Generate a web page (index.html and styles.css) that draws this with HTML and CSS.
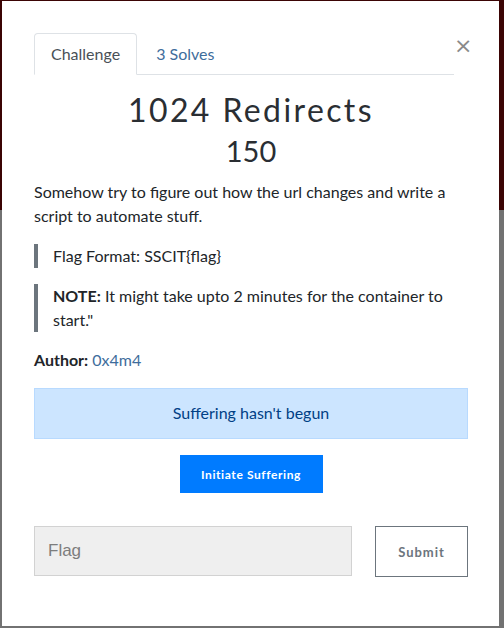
FILE: index.html
```html
<!DOCTYPE html>
<html>
<head>
<meta charset="utf-8">
<link rel="stylesheet" href="styles.css">
</head>
<body>
<div class="modal">
  <div class="modal-head">
    <ul class="tabs">
      <li class="tab active">Challenge</li>
      <li class="tab link">3 Solves</li>
    </ul>
    <button class="close" type="button">×</button>
  </div>
  <h3 class="name">1024 Redirects</h3>
  <h4 class="value">150</h4>
  <p class="desc">Somehow try to figure out how the url changes and write a script to automate stuff.</p>
  <blockquote class="quote">Flag Format: SSCIT{flag}</blockquote>
  <blockquote class="quote"><strong>NOTE:</strong> It might take upto 2 minutes for the container to start."</blockquote>
  <p class="author"><strong>Author:</strong> <a class="link">0x4m4</a></p>
  <div class="alert">Suffering hasn't begun</div>
  <div class="center"><button class="btn-primary" type="button">Initiate Suffering</button></div>
  <div class="flag-row">
    <input class="flag" type="text" placeholder="Flag">
    <button class="submit" type="button">Submit</button>
  </div>
</div>
</body>
</html>
```
FILE: styles.css
```css
html, body {
  margin: 0;
  padding: 0;
}
body {
  width: 504px;
  height: 628px;
  background: linear-gradient(#3b0404 0, #3b0404 210px, #727272 210px);
  font-family: Lato, "Open Sans", sans-serif;
  color: #212529;
  overflow: hidden;
}
.modal {
  box-sizing: border-box;
  margin: 1px 0 0 2px;
  width: 497px;
  height: 625px;
  background: #fff;
  padding: 32px 31px 0 32px;
}
.modal-head {
  display: flex;
  align-items: flex-start;
}
.tabs {
  flex: 1;
  display: flex;
  list-style: none;
  margin: 0;
  padding: 0;
  border-bottom: 1px solid #dee2e6;
  height: 41px;
}
.tab {
  font-size: 16px;
  line-height: 24px;
  padding: 8px 16px;
  border: 1px solid transparent;
  border-radius: 4px 4px 0 0;
  margin-bottom: -1px;
}
.tab.active {
  color: #495057;
  border-color: #dee2e6 #dee2e6 #fff;
  background: #fff;
}
.link {
  color: #3e6d9c;
}
.tab.link {
  margin-left: 2px;
}
.close {
  width: 14px;
  border: 0;
  background: none;
  padding: 0;
  margin: 0;
  font-family: "DejaVu Sans", sans-serif;
  font-size: 22px;
  line-height: 22px;
  color: #8a8a8a;
  margin-top: 2px;
}
.name {
  margin: 16px 0 0;
  text-align: center;
  font-family: Lato, sans-serif;
  font-weight: 400;
  font-size: 32px;
  line-height: 38px;
  letter-spacing: 2.4px;
  color: #2a2e33;
}
.value {
  margin: 4px 0 0;
  text-align: center;
  font-weight: 400;
  font-size: 29px;
  line-height: 36px;
  color: #2a2e33;
}
.desc {
  margin: 11px 0 16px;
  font-size: 16px;
  line-height: 24px;
}
.quote {
  margin: 0 0 16px;
  border-left: 4px solid #6c757d;
  padding-left: 15px;
  font-size: 16px;
  line-height: 24px;
}
.author {
  margin: 0 0 16px;
  font-size: 16px;
  line-height: 24px;
}
.alert {
  background: #cce5ff;
  border: 1px solid #b8daff;
  color: #004085;
  text-align: center;
  font-size: 16px;
  line-height: 24px;
  padding: 12px 0 13px;
}
.center {
  display: flex;
  justify-content: center;
  margin-top: 16px;
}
.btn-primary {
  background: #007bff;
  color: #fff;
  border: 0;
  width: 143px;
  height: 38px;
  font-family: Lato, sans-serif;
  font-weight: 700;
  font-size: 12px;
  letter-spacing: 0.6px;
}
.flag-row {
  display: flex;
  gap: 23px;
  margin-top: 33px;
}
.flag {
  box-sizing: border-box;
  width: 318px;
  height: 50px;
  background: #efefef;
  border: 1px solid #d2d2d2;
  padding: 0 13px;
  font-family: "Liberation Sans", sans-serif;
  font-size: 17px;
  outline: none;
}
.flag::placeholder {
  color: #7d7d7d;
}
.submit {
  box-sizing: border-box;
  width: 93px;
  height: 51px;
  background: #fff;
  border: 1px solid #6c757d;
  color: #6c757d;
  font-family: Lato, sans-serif;
  font-weight: 700;
  font-size: 13px;
  letter-spacing: 1px;
}
```
